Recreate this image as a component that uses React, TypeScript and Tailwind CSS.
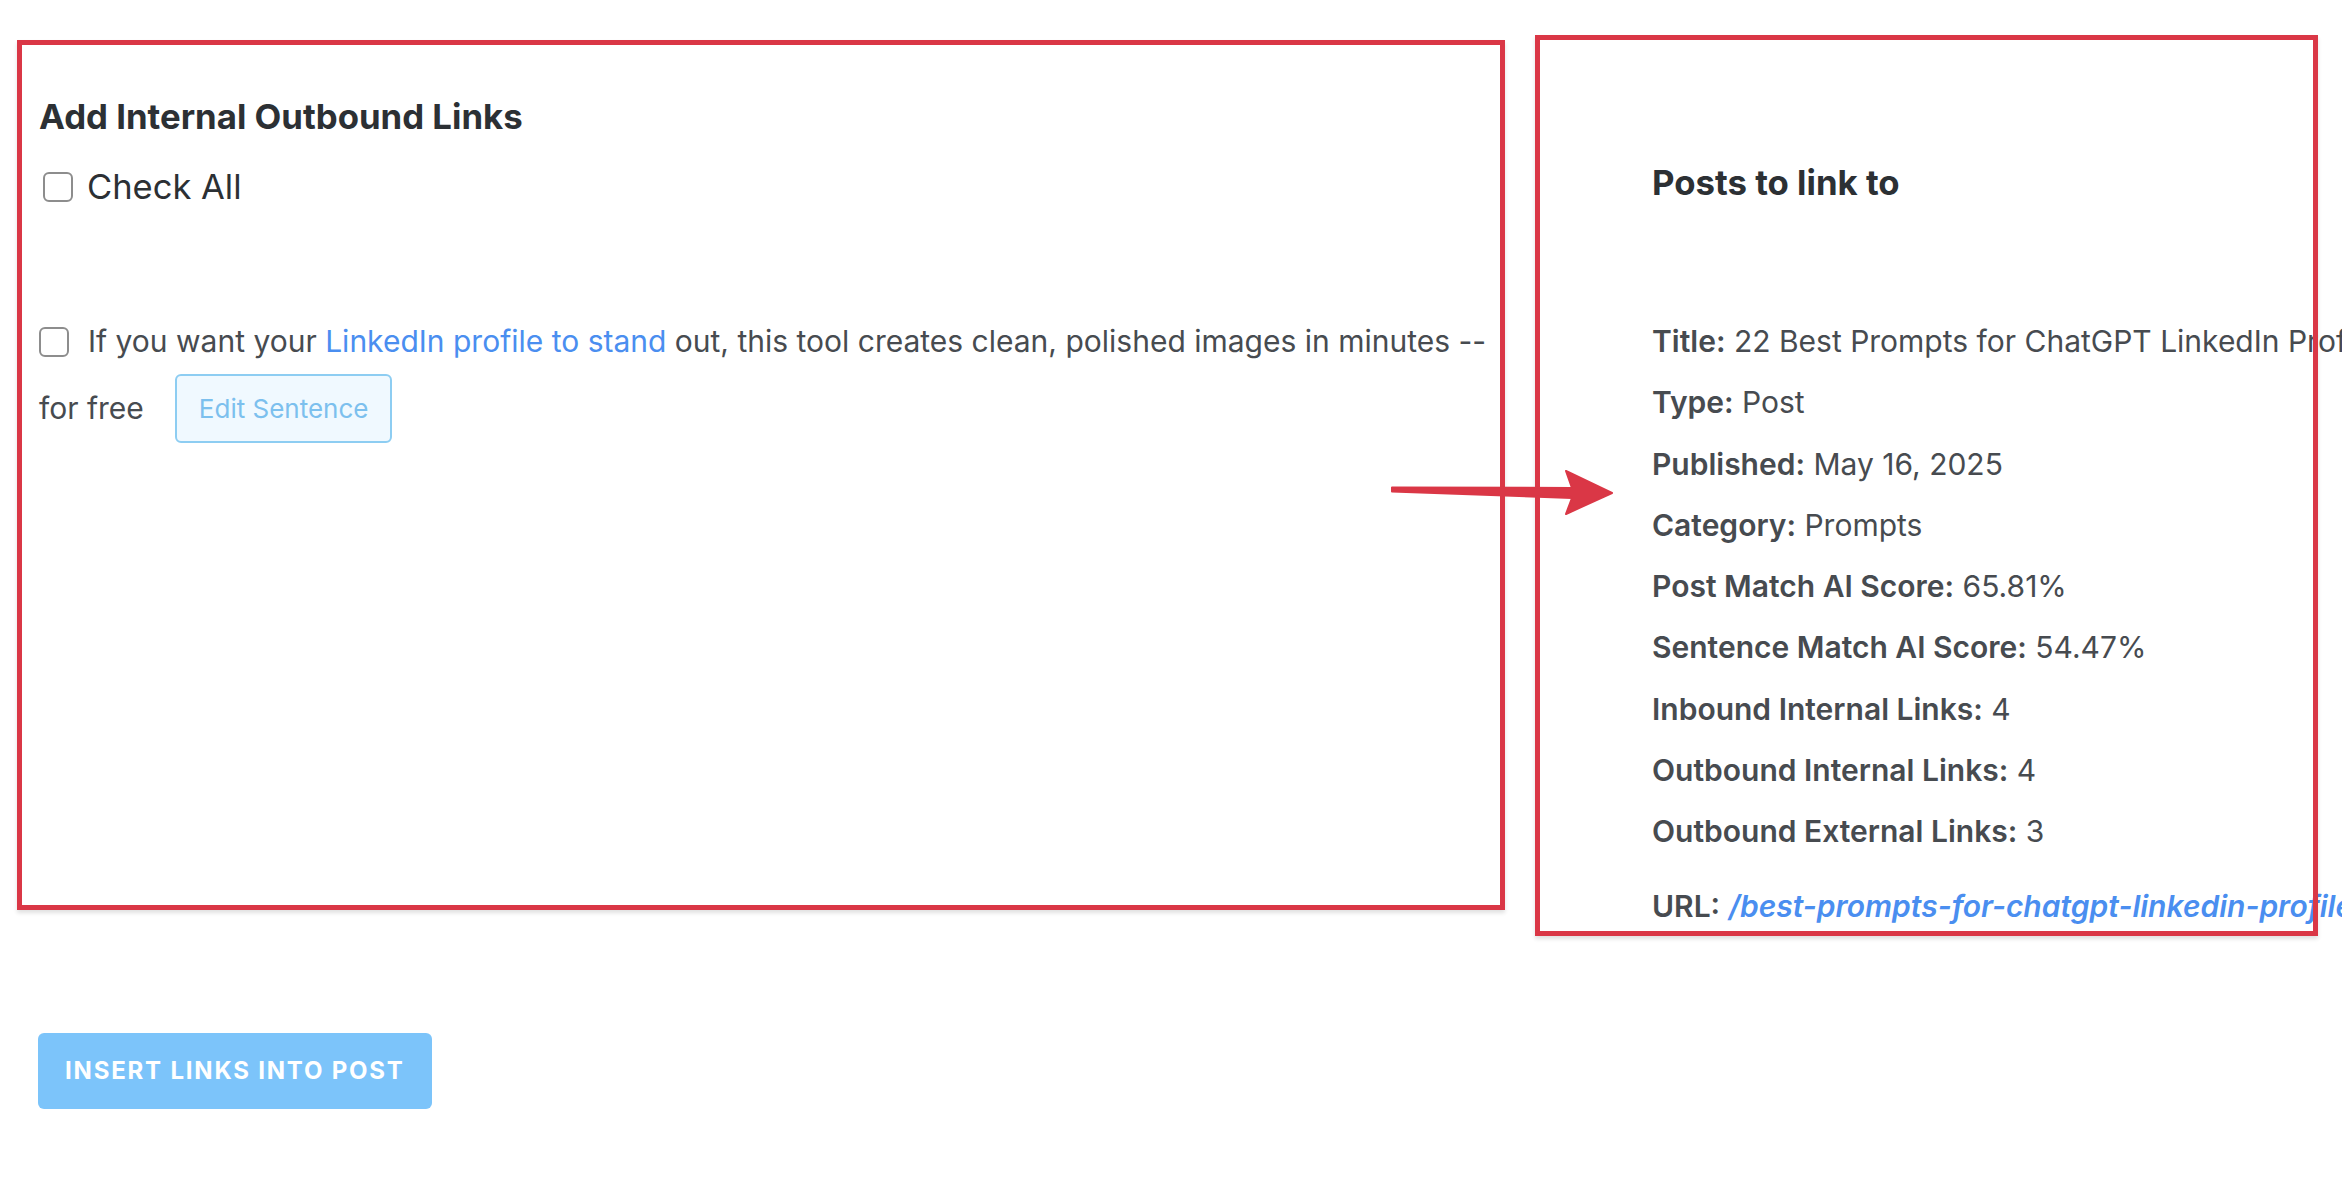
import React from "react";

function Box() {
  return (
    <span className="inline-block w-[30px] h-[30px] shrink-0 rounded-[6px] border-2 border-[#8d8d8d] bg-white" />
  );
}

const rows: [string, string][] = [
  ["Title:", "22 Best Prompts for ChatGPT LinkedIn Profile Optimization"],
  ["Type:", "Post"],
  ["Published:", "May 16, 2025"],
  ["Category:", "Prompts"],
  ["Post Match AI Score:", "65.81%"],
  ["Sentence Match AI Score:", "54.47%"],
  ["Inbound Internal Links:", "4"],
  ["Outbound Internal Links:", "4"],
  ["Outbound External Links:", "3"],
];

export default function App() {
  return (
    <div className="relative w-[2342px] h-[1187px] overflow-hidden bg-white font-['Inter',sans-serif]">
      <div className="flex items-start">
        {/* Left column */}
        <div className="w-[1500px] shrink-0 pl-[39px] pt-[95px]">
          <h2 className="text-[34.75px] font-bold leading-[42px] text-[#2c3034]">
            Add Internal Outbound Links
          </h2>
          <div className="mt-[29px] flex h-[42px] items-center gap-[14px] pl-[4px]">
            <Box />
            <span className="text-[34.5px] leading-[42px] text-[#2c3034]">Check All</span>
          </div>
          <div className="mt-[100px] text-[30px] text-[#474b50]">
            <div className="flex h-[67px] items-center gap-[19px] whitespace-nowrap">
              <Box />
              <span>
                If you want your <span className="text-[#4a8ef0]">LinkedIn profile to stand</span> out,
                this tool creates clean, polished images in minutes --
              </span>
            </div>
            <div className="flex h-[67px] items-center">
              <span>for free</span>
              <button className="ml-[31px] h-[69px] rounded-[6px] border-2 border-[#8dcdf2] bg-[#f0f9ff] px-[22px] text-[26px] text-[#7cc0ee]">
                Edit Sentence
              </button>
            </div>
          </div>
        </div>

        {/* Right column */}
        <div className="ml-[152px] shrink-0 whitespace-nowrap pt-[161px]">
          <h2 className="text-[34.75px] font-bold leading-[42px] text-[#2c3034]">
            Posts to link to
          </h2>
          <div className="mt-[108px] text-[30px] text-[#474b50]">
            {rows.map(([k, v]) => (
              <div key={k} className="leading-[61.25px]">
                <span className="font-semibold">{k}</span> {v}
              </div>
            ))}
            <div className="mt-[14px] leading-[61.25px]">
              <span className="font-semibold">URL:</span>{" "}
              <span className="font-semibold italic text-[#4a8ef0]">
                /best-prompts-for-chatgpt-linkedin-profile-optimization/
              </span>
            </div>
          </div>
        </div>
      </div>

      <div className="mt-[95px] pl-[38px]">
        <button className="h-[76px] rounded-[6px] bg-[#7cc4fa] px-[27px] text-[24px] font-bold uppercase tracking-[1.8px] text-white">
          Insert Links Into Post
        </button>
      </div>

      {/* Annotation overlays */}
      <div className="pointer-events-none absolute left-[17px] top-[40px] h-[870px] w-[1488px] border-[5px] border-[#da3746] shadow-[0_3px_4px_rgba(0,0,0,0.12)]" />
      <div className="pointer-events-none absolute left-[1535px] top-[35px] h-[901px] w-[783px] border-[5px] border-[#da3746] shadow-[0_3px_4px_rgba(0,0,0,0.12)]" />
      <svg
        className="pointer-events-none absolute left-0 top-0"
        width="2342"
        height="1187"
        viewBox="0 0 2342 1187"
      >
        <polygon
          points="1392,487.5 1572,488 1566,471 1612,493 1566,514 1572,498 1392,491.5"
          fill="#da3746"
          stroke="#da3746"
          strokeWidth="2"
          strokeLinejoin="round"
        />
      </svg>
    </div>
  );
}
